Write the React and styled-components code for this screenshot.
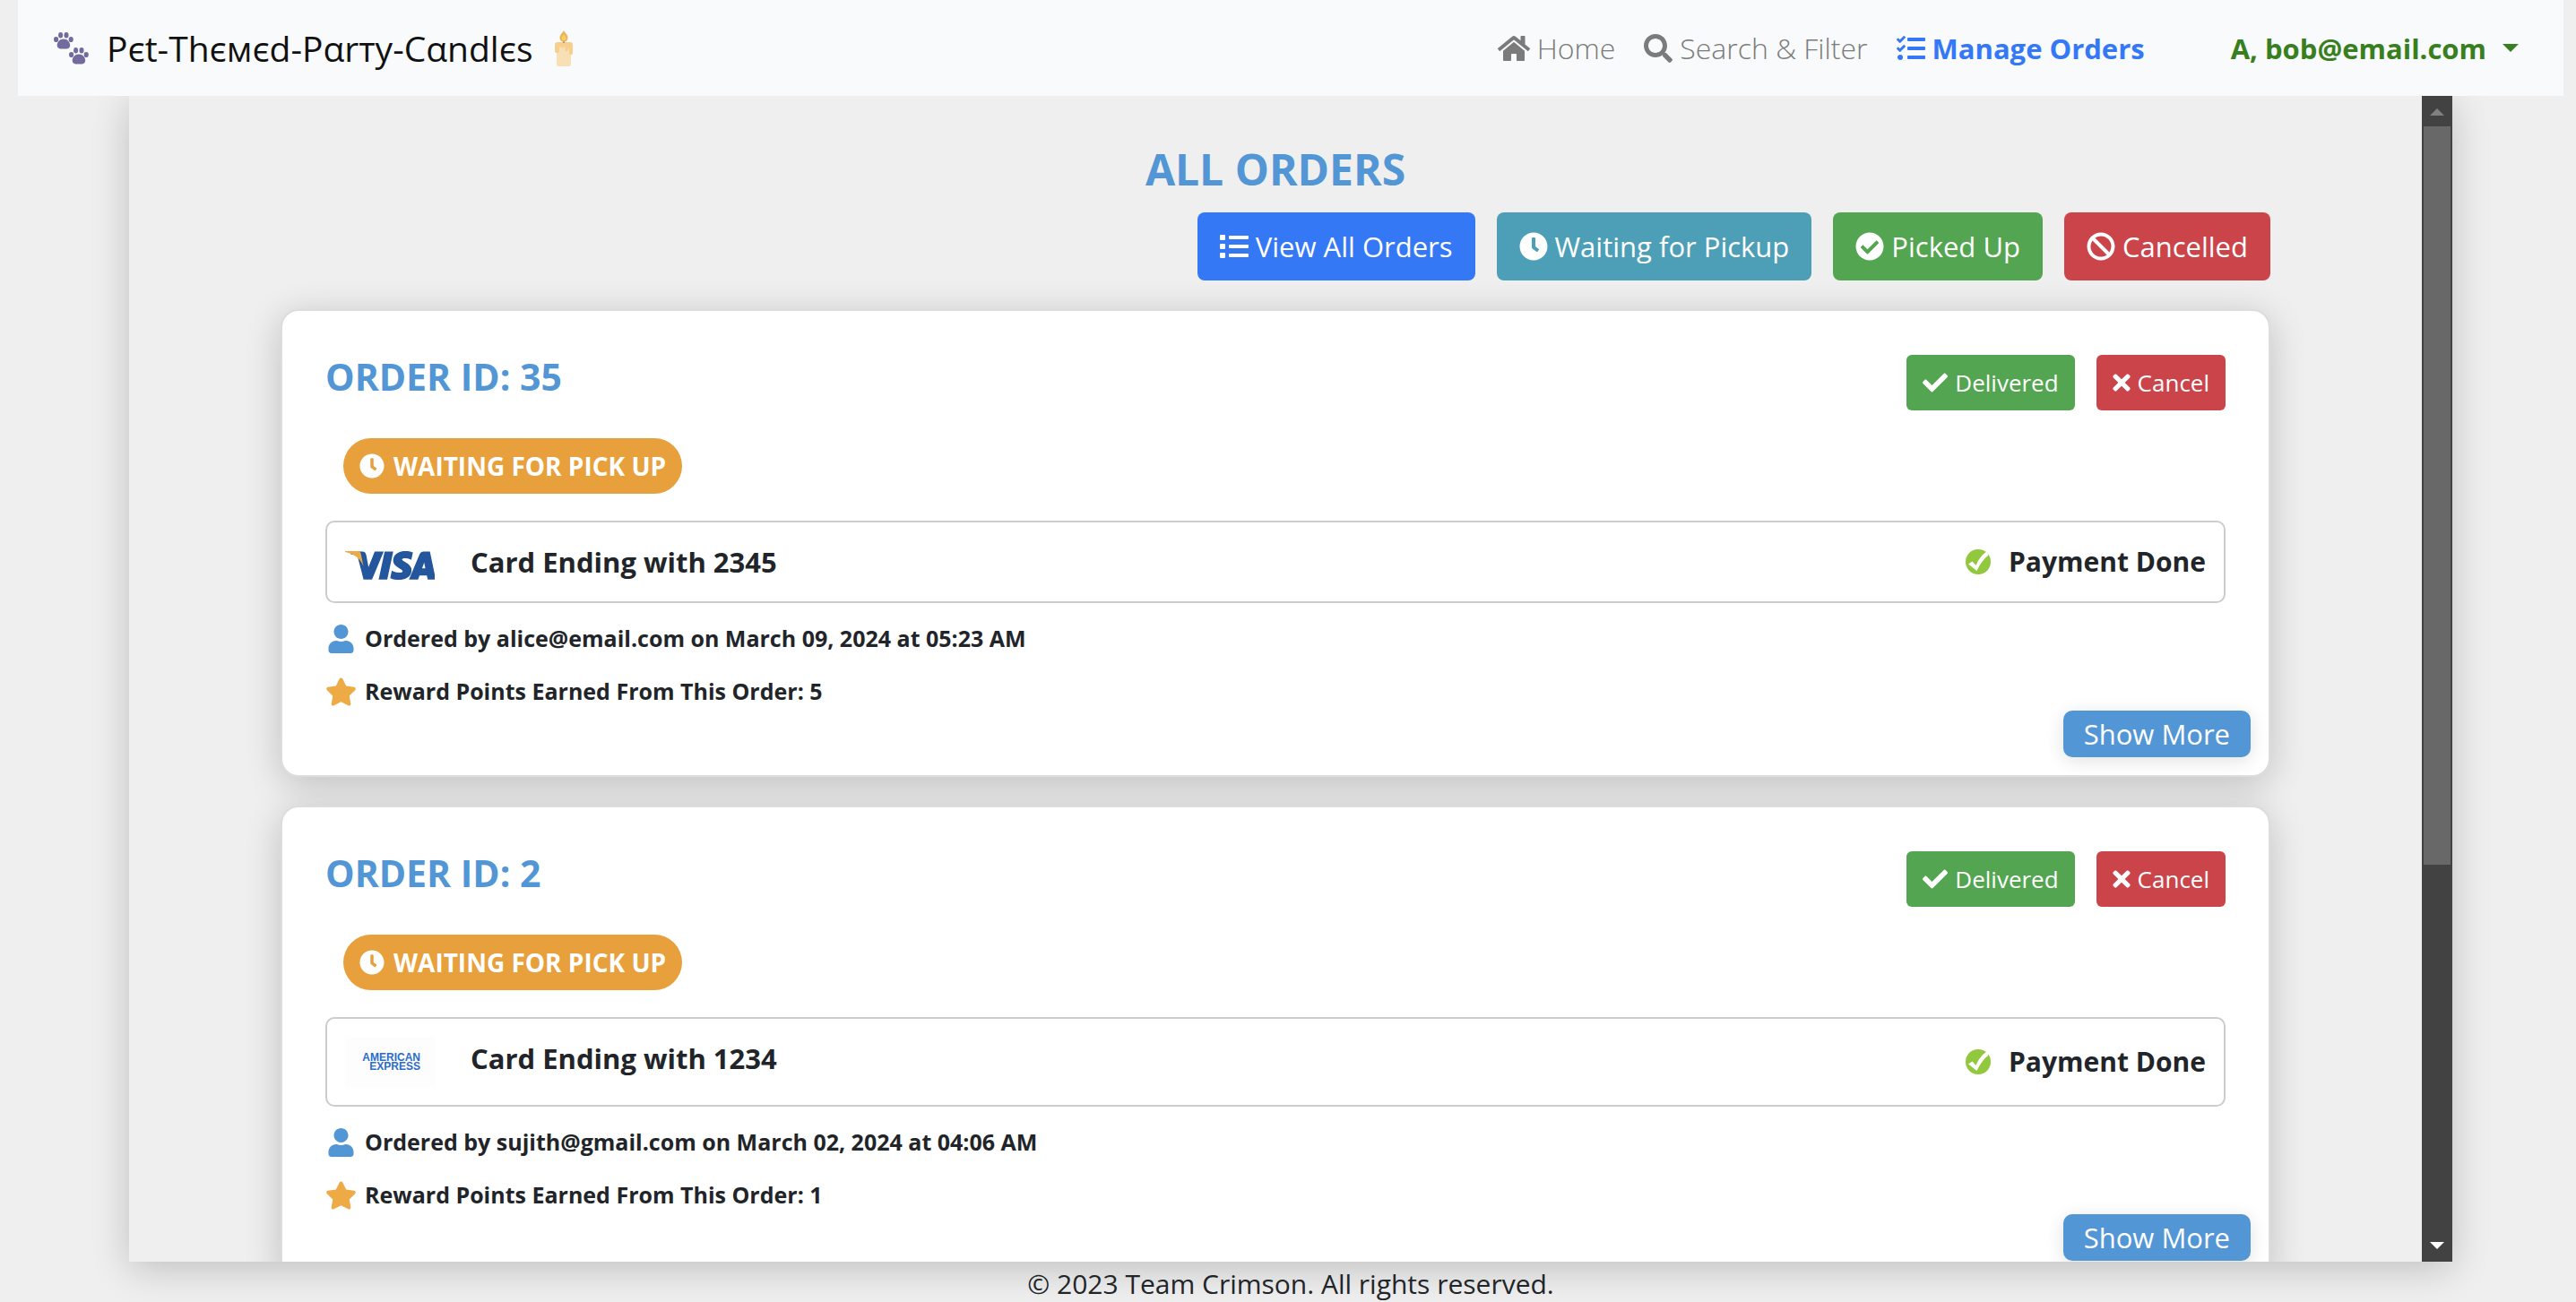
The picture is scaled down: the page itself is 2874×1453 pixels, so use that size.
import React from "react";
import styled, { createGlobalStyle } from "styled-components";
import {
  FaHome,
  FaSearch,
  FaTasks,
  FaList,
  FaClock,
  FaCheckCircle,
  FaBan,
  FaCheck,
  FaTimes,
  FaUser,
  FaStar,
} from "react-icons/fa";
import { SiVisa } from "react-icons/si";

const colors = {
  page: "#efefef",
  nav: "#f8fafc",
  ink: "#212529",
  sky: "#5296d5",
  blue: "#3478f6",
  teal: "#4c9fb6",
  green: "#54a551",
  red: "#cb444a",
  amber: "#e7a03c",
  star: "#eeab45",
};

const GlobalStyle = createGlobalStyle`
  *, *::before, *::after { box-sizing: border-box; }
  body {
    margin: 0;
    background: ${colors.page};
    color: ${colors.ink};
    font-family: "Open Sans", "Noto Sans", sans-serif;
    font-size: 31px;
    line-height: 48px;
  }
  button { font-family: inherit; border: 0; cursor: pointer; }
  h1, h2, p { margin: 0; }
  svg { display: block; flex: none; }
`;

const Icon = styled.span`
  flex: none;
  display: flex;
  color: ${(p) => p.$color || "inherit"};

  svg {
    width: ${(p) => p.$width}px;
    height: ${(p) => p.$height || p.$width}px;
  }
`;

const Page = styled.div`
  display: flex;
  flex-direction: column;
  height: 100vh;
  overflow: hidden;
  padding: 0 14px 0 20px;
`;

const NavBar = styled.header`
  position: relative;
  z-index: 1;
  flex: none;
  display: flex;
  align-items: center;
  justify-content: space-between;
  height: 107px;
  padding: 0 50px 0 40px;
  background: ${colors.nav};
`;

const Brand = styled.a`
  display: flex;
  align-items: center;
  gap: 20px;
  color: #111;
  font-size: 39px;
  text-decoration: none;
  white-space: nowrap;
`;

const BrandName = styled.span`
  margin-right: 4px;
`;

const NavLinks = styled.nav`
  display: flex;
  align-items: center;
  gap: 32px;
`;

const NavLink = styled.a`
  display: flex;
  align-items: center;
  gap: 8px;
  color: ${(p) => (p.$active ? colors.blue : "#7b7b7b")};
  font-size: ${(p) => (p.$active ? 31 : 32)}px;
  font-weight: ${(p) => (p.$active ? 700 : 300)};
  text-decoration: none;
  white-space: nowrap;
`;

const UserMenu = styled.button`
  display: flex;
  align-items: center;
  gap: 18px;
  margin-left: 64px;
  padding: 0;
  background: none;
  color: #387f20;
  font-size: 31px;
  font-weight: 700;
  line-height: 48px;
`;

const Caret = styled.span`
  border: 9px solid transparent;
  border-top-color: currentColor;
  border-bottom: 0;
`;

const Panel = styled.div`
  flex: 1;
  min-height: 0;
  display: flex;
  margin: 0 124px;
  box-shadow: 0 8px 40px rgba(0, 0, 0, 0.2);
`;

const Content = styled.main`
  flex: 1;
  min-width: 0;
  overflow: hidden;
  padding: 52px 169px 0;
  background: ${colors.page};
`;

const PageTitle = styled.h1`
  margin-bottom: 18px;
  color: ${colors.sky};
  font-size: 48px;
  font-weight: 700;
  line-height: 60px;
  text-align: center;
`;

const Filters = styled.div`
  display: flex;
  justify-content: flex-end;
  gap: 24px;
  margin-bottom: 32px;
`;

const FilterButton = styled.button`
  display: flex;
  align-items: center;
  gap: 8px;
  height: 76px;
  padding: 0 25px;
  border-radius: 8px;
  background: ${(p) => p.$color};
  color: #fff;
  font-size: 31px;
  white-space: nowrap;
`;

const Orders = styled.div`
  display: flex;
  flex-direction: column;
  gap: 32px;
`;

const Card = styled.article`
  display: flex;
  flex-direction: column;
  padding: 49px 20px 20px;
  border: 2px solid #ddd;
  border-radius: 20px;
  background: #fff;
  background-clip: padding-box;
  box-shadow: 0 8px 40px rgba(0, 0, 0, 0.2);
`;

const CardBody = styled.div`
  display: flex;
  flex-direction: column;
  padding: 0 28px;
`;

const CardHeader = styled.div`
  display: flex;
  align-items: flex-start;
  justify-content: space-between;
  margin-bottom: 31px;
`;

const OrderTitle = styled.h2`
  color: ${colors.sky};
  font-size: 41px;
  font-weight: 700;
  line-height: 48px;
`;

const Actions = styled.div`
  display: flex;
  gap: 24px;
`;

const ActionButton = styled.button`
  display: flex;
  align-items: center;
  gap: 8px;
  height: 62px;
  padding: 0 18px;
  border-radius: 6px;
  background: ${(p) => p.$color};
  color: #fff;
  font-size: 26px;
`;

const StatusPill = styled.div`
  align-self: flex-start;
  display: flex;
  align-items: center;
  gap: 10px;
  height: 62px;
  margin: 0 0 30px 20px;
  padding: 0 18px;
  border-radius: 31px;
  background: ${colors.amber};
  color: #fff;
  font-size: 28px;
  font-weight: 700;
`;

const Payment = styled.div`
  display: flex;
  align-items: center;
  justify-content: space-between;
  padding: 20px;
  border: 2px solid #ccc;
  border-radius: 10px;
  font-weight: 700;
`;

const PaymentCard = styled.div`
  display: flex;
  align-items: flex-start;
  gap: 40px;
`;

const PaymentState = styled.div`
  display: flex;
  align-items: center;
  gap: 20px;
  font-size: 30px;
`;

const VisaMark = styled.div`
  width: 100px;
  height: 48px;
  padding-top: 12px;
`;

const AmexMark = styled.div`
  width: 100px;
  height: 56px;
  padding: 18px 16px 0;
  background: #fdfdfd;
  color: #2a6cc8;
  font-family: "Liberation Sans", Arial, sans-serif;
  font-size: 12px;
  font-weight: 700;
  line-height: 10px;
  text-align: right;
`;

const Details = styled.div`
  display: flex;
  flex-direction: column;
  gap: 20px;
  margin-top: 20px;
`;

const Detail = styled.p`
  display: flex;
  align-items: center;
  gap: 9px;
  font-size: 25px;
  font-weight: 700;
  line-height: 39px;
`;

const ShowMore = styled.button`
  align-self: flex-end;
  height: 52px;
  margin-top: 2px;
  padding: 0 23px;
  border-radius: 10px;
  background: ${colors.sky};
  color: #fff;
  font-size: 31px;
  box-shadow: 0 4px 20px rgba(0, 0, 0, 0.12);
`;

const ScrollTrack = styled.div`
  flex: none;
  display: flex;
  flex-direction: column;
  align-items: center;
  width: 34px;
  padding: 14px 2px;
  background: #424242;
`;

const ScrollArrow = styled.span`
  border: 8px solid transparent;
  ${(p) =>
    p.$up
      ? "border-top: 0; border-bottom-color: #808080;"
      : "border-bottom: 0; border-top-color: #fff;"}
`;

const ScrollThumb = styled.div`
  width: 100%;
  height: 64.7%;
  margin: 12px 0 auto;
  background: #686868;
`;

const Footer = styled.footer`
  flex: none;
  height: 45px;
  padding-top: 4px;
  font-size: 30px;
  line-height: 41px;
  text-align: center;
`;

function Paw({ x, y }) {
  return (
    <g transform={`translate(${x} ${y})`}>
      <ellipse cx="2.6" cy="8" rx="2.6" ry="3.1" />
      <ellipse cx="7.6" cy="3.2" rx="2.5" ry="3.2" />
      <ellipse cx="14" cy="3.2" rx="2.5" ry="3.2" />
      <ellipse cx="19.2" cy="8" rx="2.6" ry="3.1" />
      <path d="M10.900 7.400c4.400 0 7.300 3.600 7.300 7.200 0 2.300-1.400 3.900-3.600 3.900H7.300c-2.200 0-3.600-1.600-3.600-3.900 0-3.600 2.900-7.200 7.200-7.200z" />
    </g>
  );
}

function PawPrints() {
  return (
    <svg width="39" height="36" viewBox="0 0 39 36" fill="#736a9e" aria-hidden="true">
      <Paw x={0} y={0} />
      <Paw x={17} y={17} />
    </svg>
  );
}

function Candle() {
  return (
    <svg width="20" height="40" viewBox="0 0 20 40" aria-hidden="true">
      <path d="M2 14h16v24a2 2 0 0 1-2 2H4a2 2 0 0 1-2-2z" fill="#f8e0b4" />
      <path
        d="M3 13h14a3 3 0 0 1 3 3v9c0 3-4 3-4 0v-4c0-1-1.500-1-1.500 0 0 3-3 3-3 0v-2c0-1.500-2-1.500-2 0 0 1.200-1.500 1.200-1.500 0s-3-1-3 1v3c0 3-5 3-5 0v-7a3 3 0 0 1 3-3z"
        fill="#f6cf8c"
      />
      <path d="M9 9h2v5H9z" fill="#9c9a94" />
      <path d="M10 0c2 3.500 4.500 5 4.500 8.200a4.500 4.500 0 0 1-9 0C5.500 5 8 3.500 10 0z" fill="#efb45e" />
      <path d="M10 4.500c1 1.600 2.500 2.500 2.500 4a2.500 2.500 0 0 1-5 0c0-1.500 1.500-2.400 2.500-4z" fill="#f6cf5e" />
    </svg>
  );
}

function VisaLogo() {
  return (
    <svg width="100" height="32" viewBox="0 0 100 32" role="img" aria-label="Visa">
      <SiVisa x="6" y="-31" size={94} color="#23569c" strokeWidth="0.5" />
      <path d="M0 0h14c2 0 3 .8 3.600 2.800L20.500 17C17 8 10 3 0 1z" fill="#eeab45" />
    </svg>
  );
}

function PaidIcon() {
  return (
    <svg width="28" height="28" viewBox="0 0 28 28" aria-hidden="true">
      <circle cx="14" cy="14" r="14" fill="#92c83e" />
      <path d="M3 16.500l4.500-3 4 4.500C15 10 19 5 24.500 2l.5 5c-5 4-9 9.500-12.500 17z" fill="#fff" />
    </svg>
  );
}

const filters = [
  { label: "View All Orders", icon: FaList, color: colors.blue },
  { label: "Waiting for Pickup", icon: FaClock, color: colors.teal },
  { label: "Picked Up", icon: FaCheckCircle, color: colors.green },
  { label: "Cancelled", icon: FaBan, color: colors.red },
];

const orders = [
  {
    id: 35,
    brand: "visa",
    last4: "2345",
    email: "alice@email.com",
    placed: "March 09, 2024 at 05:23 AM",
    points: 5,
  },
  {
    id: 2,
    brand: "amex",
    last4: "1234",
    email: "sujith@gmail.com",
    placed: "March 02, 2024 at 04:06 AM",
    points: 1,
  },
];

function OrderCard({ order }) {
  return (
    <Card>
      <CardBody>
        <CardHeader>
          <OrderTitle>ORDER ID: {order.id}</OrderTitle>
          <Actions>
            <ActionButton $color={colors.green}>
              <Icon $width={28}>
                <FaCheck />
              </Icon>
              Delivered
            </ActionButton>
            <ActionButton $color={colors.red}>
              <Icon $width={20} $height={28}>
                <FaTimes />
              </Icon>
              Cancel
            </ActionButton>
          </Actions>
        </CardHeader>
        <StatusPill>
          <Icon $width={28}>
            <FaClock />
          </Icon>
          WAITING FOR PICK UP
        </StatusPill>
        <Payment>
          <PaymentCard>
            {order.brand === "visa" ? (
              <VisaMark>
                <VisaLogo />
              </VisaMark>
            ) : (
              <AmexMark>
                AMERICAN
                <br />
                EXPRESS
              </AmexMark>
            )}
            <span>Card Ending with {order.last4}</span>
          </PaymentCard>
          <PaymentState>
            <PaidIcon />
            <span>Payment Done</span>
          </PaymentState>
        </Payment>
        <Details>
          <Detail>
            <Icon $width={35} $height={32} $color={colors.sky}>
              <FaUser />
            </Icon>
            <span>
              Ordered by {order.email} on {order.placed}
            </span>
          </Detail>
          <Detail>
            <Icon $width={35} $height={32} $color={colors.star}>
              <FaStar />
            </Icon>
            <span>Reward Points Earned From This Order: {order.points}</span>
          </Detail>
        </Details>
      </CardBody>
      <ShowMore>Show More</ShowMore>
    </Card>
  );
}

export default function App() {
  return (
    <>
      <GlobalStyle />
      <Page>
        <NavBar>
          <Brand href="#">
            <PawPrints />
            <BrandName>Pєt-Thємєd-Pαrтy-Cαndlєs</BrandName>
            <Candle />
          </Brand>
          <NavLinks>
            <NavLink href="#home">
              <Icon $width={36} $height={32}>
                <FaHome />
              </Icon>
              Home
            </NavLink>
            <NavLink href="#search">
              <Icon $width={32}>
                <FaSearch />
              </Icon>
              Search &amp; Filter
            </NavLink>
            <NavLink href="#orders" $active>
              <Icon $width={32}>
                <FaTasks />
              </Icon>
              Manage Orders
            </NavLink>
            <UserMenu>
              A, bob@email.com
              <Caret />
            </UserMenu>
          </NavLinks>
        </NavBar>
        <Panel>
          <Content>
            <PageTitle>ALL ORDERS</PageTitle>
            <Filters>
              {filters.map(({ label, icon: Glyph, color }) => (
                <FilterButton key={label} $color={color}>
                  <Icon $width={32}>
                    <Glyph />
                  </Icon>
                  {label}
                </FilterButton>
              ))}
            </Filters>
            <Orders>
              {orders.map((order) => (
                <OrderCard key={order.id} order={order} />
              ))}
            </Orders>
          </Content>
          <ScrollTrack>
            <ScrollArrow $up />
            <ScrollThumb />
            <ScrollArrow />
          </ScrollTrack>
        </Panel>
        <Footer>© 2023 Team Crimson. All rights reserved.</Footer>
      </Page>
    </>
  );
}
